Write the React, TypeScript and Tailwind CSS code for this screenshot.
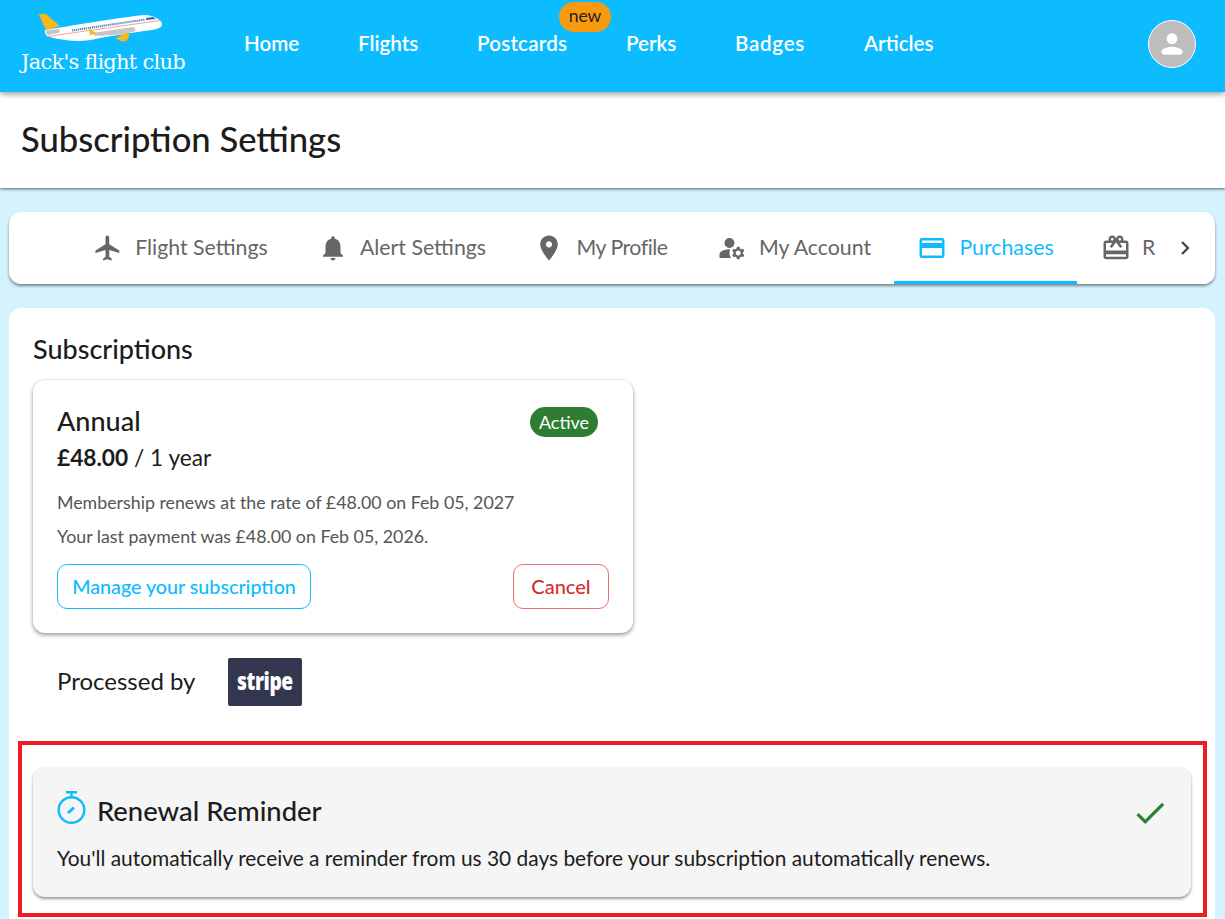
import React from "react";

const P = ({ d, className }: { d: string; className?: string }) => (
  <svg viewBox="0 0 24 24" fill="currentColor" className={className}>
    <path d={d} />
  </svg>
);

const icons = {
  flight: "M21 16v-2l-8-5V3.5c0-.83-.67-1.5-1.5-1.5S10 2.67 10 3.5V9l-8 5v2l8-2.5V19l-2 1.5V22l3.5-1 3.5 1v-1.5L13 19v-5.5l8 2.5z",
  bell: "M12 22c1.1 0 2-.9 2-2h-4c0 1.1.89 2 2 2zm6-6v-5c0-3.07-1.64-5.64-4.5-6.32V4c0-.83-.67-1.5-1.5-1.5s-1.5.67-1.5 1.5v.68C7.63 5.36 6 7.92 6 11v5l-2 2v1h16v-1l-2-2z",
  place: "M12 2C8.13 2 5 5.13 5 9c0 5.25 7 13 7 13s7-7.75 7-13c0-3.87-3.13-7-7-7zm0 9.5c-1.38 0-2.5-1.12-2.5-2.5s1.12-2.5 2.5-2.5 2.5 1.12 2.5 2.5-1.12 2.5-2.5 2.5z",
  account: "M10 12a4 4 0 1 0 0-8 4 4 0 0 0 0 8zM10.67 13.02c-.22-.01-.44-.02-.67-.02-2.42 0-4.68.67-6.61 1.82-.88.52-1.39 1.5-1.39 2.53V20h9.26c-.79-1.13-1.26-2.51-1.26-4 0-1.07.25-2.07.67-2.98zM20.75 16c0-.22-.03-.42-.06-.63l1.14-1.01-1-1.73-1.45.49c-.32-.27-.68-.48-1.08-.63L18 11h-2l-.3 1.49c-.4.15-.76.36-1.08.63l-1.45-.49-1 1.73 1.14 1.01c-.03.21-.06.41-.06.63s.03.42.06.63l-1.14 1.01 1 1.73 1.45-.49c.32.27.68.48 1.08.63L16 21h2l.3-1.49c.4-.15.76-.36 1.08-.63l1.45.49 1-1.73-1.14-1.01c.03-.21.06-.41.06-.63zM17 18c-1.1 0-2-.9-2-2s.9-2 2-2 2 .9 2 2-.9 2-2 2z",
  card: "M20 4H4c-1.11 0-1.99.89-1.99 2L2 18c0 1.11.89 2 2 2h16c1.11 0 2-.89 2-2V6c0-1.11-.89-2-2-2zm0 14H4v-6h16v6zm0-10H4V6h16v2z",
  redeem: "M20 6h-2.18c.11-.31.18-.65.18-1 0-1.66-1.34-3-3-3-1.05 0-1.96.54-2.5 1.35l-.5.67-.5-.68C10.96 2.54 10.05 2 9 2 7.34 2 6 3.34 6 5c0 .35.07.69.18 1H4c-1.11 0-1.99.89-1.99 2L2 19c0 1.11.89 2 2 2h16c1.11 0 2-.89 2-2V8c0-1.11-.89-2-2-2zm-5-2c.55 0 1 .45 1 1s-.45 1-1 1-1-.45-1-1 .45-1 1-1zM9 4c.55 0 1 .45 1 1s-.45 1-1 1-1-.45-1-1 .45-1 1-1zm11 15H4v-2h16v2zm0-5H4V8h5.08L7 10.83 8.62 12 11 8.76l1-1.36 1 1.36L15.38 12 17 10.83 14.92 8H20v6z",
  person: "M12 12c2.21 0 4-1.79 4-4s-1.79-4-4-4-4 1.79-4 4 1.79 4 4 4zm0 2c-2.67 0-8 1.34-8 3.5 0 1.2.8 2.5 2 2.5h12c1.2 0 2-1.3 2-2.5 0-2.16-5.33-3.5-8-3.5z",
};

const Plane = () => (
  <svg viewBox="38 13 126 30" className="w-[126px] h-[30px]">
    <path d="M39 14.5 Q39 14 40 14 L45 14 Q47 14 49 17 L60 26 L46 30 Q45 27 43 24 Z" fill="#fdb813" />
    <path d="M45 30 C70 26 115 18 145 15 C152 15 160 19 162 23 C163 27 158 29 152 30 C130 33 112 36 100 38 C88 41 78 42 65 40 C58 39 52 38 47 36 Q44 33 45 30 Z" fill="#ffffff" />
    <path d="M47 36.5 L160 20.5" stroke="#f28b78" strokeWidth="0.8" fill="none" />
    <path d="M72 30.5 L145 19.5" stroke="#3f7fc4" strokeWidth="2" strokeDasharray="1.2 0.8" fill="none" />
    <path d="M46 30.5 L59 29 Q61 31 59 33 L48 35 Q45 33 46 30.5 Z" fill="#c6c6c6" />
    <path d="M92 33 L133 27 Q136 28 135 31 Q128 34 120 34.5 L95 36 Z" fill="#c6c6c6" />
    <path d="M89 28 L96 33 L90 35.5 Z" fill="#fdb813" />
    <path d="M116 38 L129 32 Q130 38 126 41 Q120 42 116 38 Z" fill="#fdb813" />
    <path d="M146 18 L153 17 L156 19 L146 20 Z" fill="#2a6cb8" />
  </svg>
);

const Tab = ({ icon, label, active, w, track = "" }: { icon: string; label: string; active?: boolean; w: string; track?: string }) => (
  <div className={`${w} h-full shrink-0 relative flex items-center justify-center gap-[12px] text-[21.3px] ${active ? "text-[#0dbcff]" : "text-[#666666]"}`}>
    <P d={icon} className="w-[30px] h-[30px] shrink-0" />
    <span className={`whitespace-nowrap ${track}`}>{label}</span>
    {active && <span className="absolute left-0 right-0 bottom-0 h-[3px] bg-[#0dbcff]" />}
  </div>
);

const nav = [
  { n: "Home", w: "w-[55px]", t: "" },
  { n: "Flights", w: "w-[60px]", t: "" },
  { n: "Postcards", w: "w-[90px]", t: "tracking-[0.2px]" },
  { n: "Perks", w: "w-[50px]", t: "" },
  { n: "Badges", w: "w-[70px]", t: "tracking-[0.7px]" },
  { n: "Articles", w: "w-[70px]", t: "" },
];

export default function App() {
  return (
    <div className="relative h-[919px] overflow-hidden bg-[#d5f3ff] text-[#1c1c1c] font-[Lato,sans-serif]">
      <header className="relative z-20 h-[92px] bg-[#0dbcff] flex items-start shadow-[0_2px_6px_rgba(0,0,0,0.4)]">
        <div className="w-[244px] shrink-0 pl-[21px] flex flex-col">
          <div className="pl-[17px] pt-[13px] h-[48px]"><Plane /></div>
          <div className="text-white text-[21px] leading-[28px] whitespace-nowrap font-['DejaVu_Serif',serif] tracking-[-0.75px]">Jack's flight club</div>
        </div>
        <nav className="flex gap-[59px] h-[86px] items-center">
          {nav.map(({ n, w, t }) => (
            <div key={n} className={`relative text-white text-[20.6px] font-semibold whitespace-nowrap ${w} ${t}`}>
              {n}
              {n === "Postcards" && (
                <span className="absolute -top-[26px] left-[82px] h-[30px] w-[52px] rounded-full bg-[#f89a0e] text-[#222222] text-[17.5px] font-normal tracking-normal flex items-center justify-center">new</span>
              )}
            </div>
          ))}
        </nav>
        <div className="ml-auto mr-[29px] mt-[20px] w-[48px] h-[48px] rounded-full bg-[#bdbdbd] border border-white flex items-center justify-center text-white">
          <P d={icons.person} className="w-[32px] h-[32px]" />
        </div>
      </header>

      <div className="relative z-10 h-[96px] bg-white flex items-center pl-[21px] pb-[2px] shadow-[0_1px_3px_rgba(0,0,0,0.6)]">
        <h1 className="text-[34.6px] font-medium">Subscription Settings</h1>
      </div>

      <main className="pl-[9px] pr-[10px] pt-[24px] flex flex-col gap-[24px]">
        <div className="h-[72px] bg-white rounded-[12px] shadow-[0_2px_3px_rgba(0,0,0,0.45)] flex items-stretch pl-[56px] relative overflow-hidden">
          <Tab icon={icons.flight} label="Flight Settings" w="w-[231px]" />
          <Tab icon={icons.bell} label="Alert Settings" w="w-[212px]" />
          <Tab icon={icons.place} label="My Profile" w="w-[186px]" track="tracking-[-0.5px]" />
          <Tab icon={icons.account} label="My Account" w="w-[200px]" />
          <Tab icon={icons.card} label="Purchases" w="w-[183px]" active />
          <div className="flex-1 min-w-0 overflow-hidden flex items-center pl-[24px] gap-[11px] text-[21.3px] text-[#666666]">
            <P d={icons.redeem} className="w-[30px] h-[30px] shrink-0" />
            <span>R</span>
          </div>
          <div className="w-[59px] mr-[1px] shrink-0 flex items-center justify-center bg-white text-[#444444]">
            <svg viewBox="0 0 24 24" className="w-[24px] h-[24px]" fill="none" stroke="currentColor" strokeWidth="2.2"><path d="M9 6l6 6-6 6" /></svg>
          </div>
        </div>

        <section className="bg-white rounded-[12px] h-[640px] px-[24px] pt-[24px]">
          <h2 className="text-[27px] leading-[34px] font-medium">Subscriptions</h2>
          <div className="mt-[14px] w-[600px] h-[253px] rounded-[12px] shadow-[0_2px_4px_rgba(0,0,0,0.4),0_0_2px_rgba(0,0,0,0.08)] px-[24px] pt-[23px]">
            <div className="flex items-center justify-between pr-[11px] h-[36px]">
              <div className="text-[27px] leading-[36px] font-medium">Annual</div>
              <div className="mt-[2px] h-[30px] w-[68px] rounded-full bg-[#2e7d32] text-white text-[18px] flex items-center justify-center">Active</div>
            </div>
            <div className="mt-[1px] text-[22.7px] leading-[36px]"><b className="font-bold">£48.00</b> / 1 year</div>
            <div className="mt-[9px] text-[17.8px] leading-[34px] text-[#555555]">
              <div>Membership renews at the rate of £48.00 on Feb 05, 2027</div>
              <div>Your last payment was £48.00 on Feb 05, 2026.</div>
            </div>
            <div className="mt-[11px] flex justify-between">
              <div className="h-[45px] w-[254px] rounded-[10px] border border-[#0dbcff] text-[#0dbcff] text-[19.7px] font-medium flex items-center justify-center">Manage your subscription</div>
              <div className="h-[45px] w-[96px] rounded-[10px] border border-[#e57373] text-[#d32f2f] text-[20px] font-medium flex items-center justify-center pb-[1px]">Cancel</div>
            </div>
          </div>
          <div className="mt-[25px] pl-[24px] flex items-center h-[48px]">
            <span className="w-[171px] text-[24px] pb-[2px]">Processed by</span>
            <span className="w-[74px] h-[48px] rounded-[2px] bg-[#33364f] text-white flex items-center justify-center">
              <span className="inline-block text-[24px] font-extrabold font-['Open_Sans',sans-serif] tracking-[-0.5px] scale-x-[0.8] pb-[2px]">stripe</span>
            </span>
          </div>
          <div className="mt-[61px] h-[130px] rounded-[12px] bg-[#f5f5f5] shadow-[0_2px_3px_rgba(0,0,0,0.4)] px-[24px] pt-[22px]">
            <div className="flex items-center h-[44px]">
              <svg viewBox="0 0 29 33" className="w-[29px] h-[33px] -mt-[7px] text-[#0dbcff]" fill="none" stroke="currentColor" strokeWidth="2.4">
                <path d="M9 1.2h11M14.5 1.2v6" />
                <circle cx="14.5" cy="19" r="12.8" />
                <path d="M11 22l6-5.5" strokeWidth="3" />
              </svg>
              <span className="ml-[11px] text-[27.4px] font-medium">Renewal Reminder</span>
              <svg viewBox="0 0 24 24" className="ml-auto -mr-[2px] mt-[3px] w-[38px] h-[38px] text-[#2e7d32]" fill="currentColor"><path d="M9 16.17L4.83 12l-1.42 1.41L9 19 21 7l-1.41-1.41z" /></svg>
            </div>
            <p className="mt-[10px] text-[20.9px] leading-[30px]">You'll automatically receive a reminder from us 30 days before your subscription automatically renews.</p>
          </div>
        </section>
      </main>

      <div className="absolute z-30 left-[18px] top-[741px] w-[1189px] h-[176px] border-[4px] border-[#ed1c24] pointer-events-none" />
    </div>
  );
}
